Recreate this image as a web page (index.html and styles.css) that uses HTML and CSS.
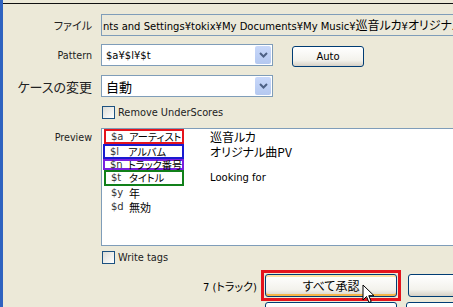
FILE: index.html
```html
<!DOCTYPE html>
<html lang="ja">
<head>
    <meta charset="UTF-8">
    <title>Tag Editor</title>
    <link rel="stylesheet" href="styles.css">
</head>
<body>
    <div class="window">
        <div class="topline"></div>
        <div class="frame">
            <div class="edge"></div>
            <div class="form">
                <div class="row row-file">
                    <span class="label jp">ファイル</span>
                    <div class="field path">nts and Settings¥tokix¥My Documents¥My Music¥<span class="jp">巡音ルカ</span>¥<span class="jp">オリジナル曲</span>PV¥01.mp3</div>
                </div>

                <div class="row row-pattern">
                    <span class="label">Pattern</span>
                    <div class="combo">
                        <span class="combo-text">$a¥$l¥$t</span>
                        <span class="drop"><svg width="9" height="6" viewBox="0 0 9 6"><path d="M1 1l3.5 3.5L8 1" fill="none" stroke="#4d6185" stroke-width="2"/></svg></span>
                    </div>
                    <button class="btn auto">Auto</button>
                </div>

                <div class="row row-case">
                    <span class="label jp big">ケースの変更</span>
                    <div class="combo">
                        <span class="combo-text jp big">自動</span>
                        <span class="drop"><svg width="9" height="6" viewBox="0 0 9 6"><path d="M1 1l3.5 3.5L8 1" fill="none" stroke="#4d6185" stroke-width="2"/></svg></span>
                    </div>
                </div>

                <div class="row row-check">
                    <span></span>
                    <label class="check"><span class="box"></span>Remove UnderScores</label>
                </div>

                <div class="row row-preview">
                    <span class="label">Preview</span>
                    <div class="listbox">
                        <div class="item"><span class="tag mark-red"><b>$a</b><span class="jp">アーティスト</span></span><span class="value jp">巡音ルカ</span></div>
                        <div class="item"><span class="tag mark-blue"><b>$l</b><span class="jp">アルバム</span></span><span class="value jp">オリジナル曲PV</span></div>
                        <div class="item short"><span class="tag mark-purple"><b>$n</b><span class="jp">トラック番号</span></span><span class="value"></span></div>
                        <div class="item tall"><span class="tag mark-green"><b>$t</b><span class="jp">タイトル</span></span><span class="value">Looking for</span></div>
                        <div class="item plain"><span class="tag"><b>$y</b><span class="jp">年</span></span></div>
                        <div class="item plain"><span class="tag"><b>$d</b><span class="jp">無効</span></span></div>
                    </div>
                </div>

                <div class="row row-write">
                    <span></span>
                    <label class="check"><span class="box"></span>Write tags</label>
                </div>

                <div class="actions">
                    <span class="count">7 (<span class="jp">トラック</span>)</span>
                    <div class="mark-btn">
                        <button class="btn wide hover jp">すべて承認</button>
                        <svg class="cursor" width="13" height="20" viewBox="0 0 13 20"><path d="M1 1v15l3.5-3.5 2.5 6 2.2-1-2.4-5.8H12z" fill="#fff" stroke="#000" stroke-width="1"/></svg>
                    </div>
                    <button class="btn wide"></button>
                </div>
                <div class="actions next">
                    <button class="btn wide under"></button>
                    <button class="btn wide under"></button>
                </div>
            </div>
        </div>
    </div>
</body>
</html>
```

FILE: styles.css
```css
html, body {
    margin: 0;
    padding: 0;
    overflow: hidden;
}
body {
    background: #ece9d8;
    font-family: "DejaVu Sans", "Noto Sans CJK JP", sans-serif;
    font-size: 9.6px;
    color: #000;
    width: 453px;
    height: 307px;
}
.jp {
    font-family: "Noto Sans CJK JP", sans-serif;
    font-feature-settings: "palt";
}
.window {
    height: 307px;
    overflow: hidden;
}
.topline {
    height: 3px;
    background: #ece9d8;
    border-bottom: 1px solid #111;
    margin-left: 3px;
}
.frame {
    display: flex;
    height: 303px;
}
.edge {
    width: 3px;
    background: #2f63c0;
    margin-top: -4px;
    height: 307px;
    flex: none;
}
.form {
    flex: 1;
    min-width: 0;
    overflow: hidden;
}
.row {
    display: grid;
    grid-template-columns: 89px 1fr;
    column-gap: 9px;
    align-items: center;
}
.label {
    text-align: right;
    font-size: 9.6px;
    color: #222;
    white-space: nowrap;
}
.label.jp {
    font-size: 11px;
}
.label.big {
    font-size: 13px;
}
.field {
    height: 20px;
    line-height: 20px;
    border: 1px solid #7f9db9;
    background: #ebe9da;
    white-space: nowrap;
    overflow: hidden;
    padding-left: 4px;
    text-indent: -3px;
    font-size: 10px;
    margin-right: -20px;
}
.path .jp {
    font-size: 12px;
}
.row-file {
    margin-top: 10px;
}
.row-pattern {
    margin-top: 7px;
    grid-template-columns: 89px 172px 1fr;
}
.row-case {
    margin-top: 8px;
    grid-template-columns: 89px 172px 1fr;
}
.combo {
    height: 20px;
    border: 1px solid #7f9db9;
    background: #fff;
    display: flex;
    align-items: center;
    justify-content: space-between;
}
.combo-text {
    padding-left: 4px;
    font-size: 10px;
}
.combo-text.big {
    font-size: 13px;
}
.drop {
    width: 16px;
    height: 18px;
    margin-right: 1px;
    background: linear-gradient(#c8d8fa, #b4c8f0);
    border-radius: 2px;
    display: flex;
    align-items: center;
    justify-content: center;
}
.btn {
    font-family: "DejaVu Sans", sans-serif;
    font-size: 10px;
    height: 21px;
    border: 1px solid #003c74;
    border-radius: 3px;
    background: linear-gradient(#ffffff 0%, #f3f2ec 70%, #d6d0c5 100%);
    padding: 0;
    color: #000;
    flex: none;
}
.auto {
    width: 72px;
    margin-left: 10px;
    margin-top: 3px;
    justify-self: start;
}
.row-check {
    margin-top: 9px;
}
.check {
    display: flex;
    align-items: center;
    gap: 3px;
    font-size: 9.8px;
    color: #222;
    padding-left: 1px;
    white-space: nowrap;
}
.box {
    width: 11px;
    height: 11px;
    border: 1px solid #1c5180;
    background: linear-gradient(135deg, #dcdcd6, #ffffff);
}
.row-preview {
    margin-top: 9px;
    align-items: start;
}
.row-preview .label {
    padding-top: 4px;
}
.listbox {
    height: 116px;
    border: 1px solid #7f9db9;
    background: #fff;
    margin-right: -20px;
}
.item {
    display: flex;
    height: 15px;
    line-height: 12px;
    align-items: center;
    white-space: nowrap;
}
.item.short {
    height: 11px;
}
.item.tall {
    height: 16px;
}
.item.plain {
    height: 14px;
}
.tag {
    display: flex;
    align-items: center;
    flex: none;
    width: 80px;
    height: 100%;
    box-sizing: border-box;
    padding-left: 5px;
    margin-left: 2px;
    border: 2px solid transparent;
}
.tag b {
    font-weight: normal;
    width: 18px;
    flex: none;
    color: #333;
    font-size: 10px;
}
.tag .jp {
    font-size: 10.2px;
}
.item.plain .jp {
    font-size: 11px;
}
.mark-red {
    border-color: #e4131c;
}
.mark-blue {
    border-color: #1a1ad0;
    margin-left: 1px;
    width: 81px;
}
.mark-purple {
    border-color: #7a1fe0;
    margin-left: 1px;
    width: 81px;
}
.mark-green {
    border-color: #11801a;
}
.value {
    margin-left: 26px;
    font-size: 10px;
}
.value.jp {
    font-size: 12px;
}
.row-write {
    margin-top: 5px;
}
.actions {
    display: flex;
    align-items: center;
    margin-top: 6px;
    padding-left: 200px;
    white-space: nowrap;
}
.count {
    font-size: 10px;
    width: 58px;
    flex: none;
}
.count .jp {
    font-size: 11px;
}
.mark-btn {
    position: relative;
    flex: none;
    border: 3px solid #e4131c;
    padding: 1px;
    display: flex;
}
.wide {
    width: 132px;
    height: 23px;
}
.hover {
    font-family: "Noto Sans CJK JP", sans-serif;
    font-size: 12px;
    box-shadow: inset 0 -2px 0 #f5b449, inset 0 2px 0 #ffe3a6;
}
.cursor {
    position: absolute;
    left: 98px;
    top: 11px;
}
.actions > .btn.wide {
    margin-left: 7px;
}
.actions.next {
    margin-top: 1px;
    padding-left: 262px;
}
.actions.next .btn.wide {
    margin-left: 0;
    margin-right: 9px;
}
```
